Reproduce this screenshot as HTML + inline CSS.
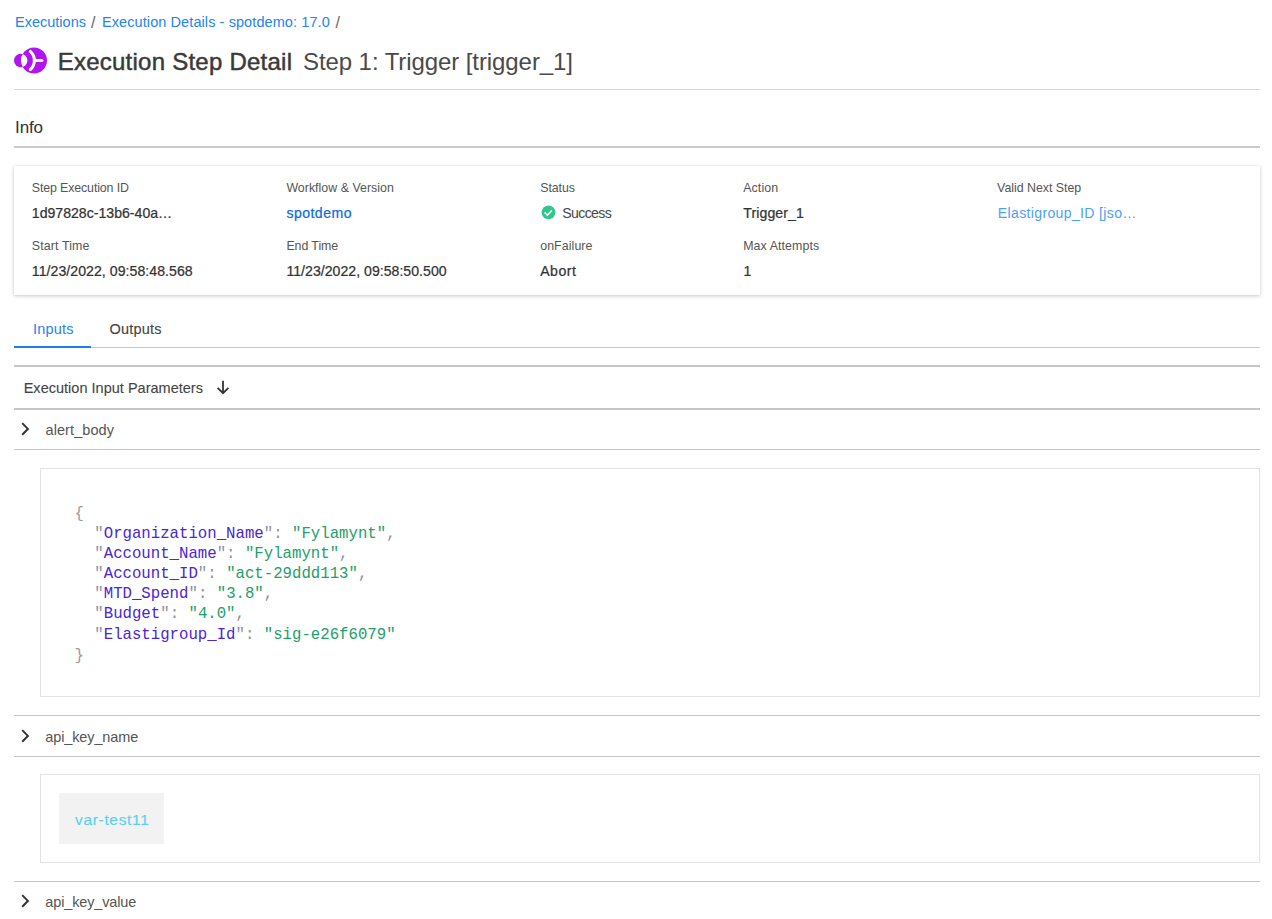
<!DOCTYPE html>
<html><head><meta charset="utf-8"><title>Execution Step Detail</title>
<style>
html,body{margin:0;padding:0;background:#fff;width:1272px;height:919px;overflow:hidden;position:relative;font-family:"Liberation Sans",sans-serif;}
.t{position:absolute;white-space:nowrap;font-family:"Liberation Sans",sans-serif;}
.m{position:absolute;white-space:pre;font-family:"Liberation Mono",monospace;font-size:15.7px;line-height:15.7px;}
.hl{position:absolute;left:14px;width:1246px;}
.pn{color:#8b90a6}
.br{color:#9a9a9a}
.ky{color:#4a25d9}
.st{color:#22a06b}
.card{position:absolute;left:14px;top:166px;width:1246px;height:129px;background:#fff;box-shadow:0 1px 4px rgba(0,0,0,0.2),0 0 1px rgba(0,0,0,0.12);}
.box{position:absolute;left:40px;width:1218px;border:1px solid #e3e3e3;background:#fff;}
svg{position:absolute;overflow:visible}
</style></head><body>
<svg style="left:0;top:0" width="60" height="90" viewBox="0 0 60 90">
  <circle cx="20.7" cy="60.5" r="6.7" fill="#b114ef"/>
  <circle cx="34" cy="60.5" r="13" fill="#b114ef"/>
  <clipPath id="cpS"><circle cx="20.7" cy="60.5" r="6.7"/></clipPath>
  <circle cx="34" cy="60.5" r="13" fill="#fff" clip-path="url(#cpS)"/>
  <path d="M30.3 51.4 A12.18 12.18 0 0 1 30.3 69.6" fill="none" stroke="#fff" stroke-width="3" stroke-linecap="round"/>
  <path d="M34.3 60.5 L41.9 60.5" fill="none" stroke="#fff" stroke-width="3.1" stroke-linecap="round"/>
</svg>
<div class="hl" style="top:89px;height:1px;background:#d4d4d4"></div>
<div class="hl" style="top:146px;height:2px;background:#c9c9c9"></div>
<div class="card"></div>
<svg style="left:0;top:0" width="600" height="300">
  <circle cx="548.5" cy="212.3" r="6.9" fill="#2dc98a"/>
  <path d="M544.6 212.4 L547.4 215.2 L551.9 210.4" fill="none" stroke="#fff" stroke-width="1.6"/>
</svg>
<div class="hl" style="top:347px;height:1px;background:#c8c8c8"></div>
<div style="position:absolute;left:14px;top:346px;width:77px;height:2px;background:#1a7ef5"></div>
<div class="hl" style="top:365px;height:2px;background:#c6c6c6"></div>
<svg style="left:0;top:0" width="300" height="919">
  <path d="M223 380.8 V393" fill="none" stroke="#333" stroke-width="1.8"/>
  <path d="M217.6 387.8 L223 393.2 L228.4 387.8" fill="none" stroke="#333" stroke-width="1.8"/>
  <path d="M22.2 423.1 L27.9 428.9 L22.2 434.7" fill="none" stroke="#333" stroke-width="2"/>
  <path d="M22.2 730.1 L27.9 735.9 L22.2 741.7" fill="none" stroke="#333" stroke-width="2"/>
  <path d="M22.2 895.1 L27.9 900.9 L22.2 906.7" fill="none" stroke="#333" stroke-width="2"/>
</svg>
<div class="hl" style="top:408px;height:2px;background:#c6c6c6"></div>
<div class="hl" style="top:449px;height:1px;background:#c6c6c6"></div>
<div class="box" style="top:468px;height:227px"></div>
<div class="hl" style="top:715px;height:1px;background:#c6c6c6"></div>
<div class="hl" style="top:756px;height:1px;background:#c6c6c6"></div>
<div class="box" style="top:774px;height:87px"></div>
<div style="position:absolute;left:59px;top:793px;width:105px;height:51px;background:#f2f2f2"></div>
<div class="hl" style="top:881px;height:1px;background:#c6c6c6"></div>
<span class="t" style="left:15.00px;top:15.33px;font-size:14.5px;line-height:14.5px;letter-spacing:0.006px;color:#2484f2;font-weight:400;">Executions</span>
<span class="t" style="left:91.00px;top:14.96px;font-size:16px;line-height:16px;letter-spacing:0.000px;color:#666;font-weight:400;">/</span>
<span class="t" style="left:102.00px;top:15.33px;font-size:14.5px;line-height:14.5px;letter-spacing:0.086px;color:#2484f2;font-weight:400;">Execution Details - spotdemo: 17.0</span>
<span class="t" style="left:335.40px;top:14.96px;font-size:16px;line-height:16px;letter-spacing:0.000px;color:#666;font-weight:400;">/</span>
<span class="t" style="left:57.70px;top:50.08px;font-size:24px;line-height:24px;letter-spacing:0.243px;color:#3a3a3a;font-weight:400;-webkit-text-stroke:0.48px currentColor;">Execution Step Detail</span>
<span class="t" style="left:303.00px;top:49.88px;font-size:24px;line-height:24px;letter-spacing:-0.083px;color:#4a4a4a;font-weight:400;">Step 1: Trigger [trigger_1]</span>
<span class="t" style="left:15.10px;top:118.51px;font-size:17px;line-height:17px;letter-spacing:-0.183px;color:#333;font-weight:400;">Info</span>
<span class="t" style="left:31.80px;top:181.50px;font-size:12.4px;line-height:12.4px;letter-spacing:-0.128px;color:#555;font-weight:400;">Step Execution ID</span>
<span class="t" style="left:286.40px;top:181.50px;font-size:12.4px;line-height:12.4px;letter-spacing:0.012px;color:#555;font-weight:400;">Workflow &amp; Version</span>
<span class="t" style="left:540.20px;top:181.50px;font-size:12.4px;line-height:12.4px;letter-spacing:-0.070px;color:#555;font-weight:400;">Status</span>
<span class="t" style="left:743.20px;top:181.50px;font-size:12.4px;line-height:12.4px;letter-spacing:0.110px;color:#555;font-weight:400;">Action</span>
<span class="t" style="left:997.10px;top:181.50px;font-size:12.4px;line-height:12.4px;letter-spacing:-0.025px;color:#555;font-weight:400;">Valid Next Step</span>
<span class="t" style="left:31.80px;top:240.10px;font-size:12.4px;line-height:12.4px;letter-spacing:0.122px;color:#555;font-weight:400;">Start Time</span>
<span class="t" style="left:286.40px;top:240.10px;font-size:12.4px;line-height:12.4px;letter-spacing:-0.071px;color:#555;font-weight:400;">End Time</span>
<span class="t" style="left:540.20px;top:240.10px;font-size:12.4px;line-height:12.4px;letter-spacing:0.075px;color:#555;font-weight:400;">onFailure</span>
<span class="t" style="left:743.20px;top:240.10px;font-size:12.4px;line-height:12.4px;letter-spacing:0.082px;color:#555;font-weight:400;">Max Attempts</span>
<span class="t" style="left:31.80px;top:205.56px;font-size:14.1px;line-height:14.1px;letter-spacing:0.006px;color:#333;font-weight:400;-webkit-text-stroke:0.24px currentColor;">1d97828c-13b6-40a…</span>
<span class="t" style="left:286.40px;top:205.56px;font-size:14.1px;line-height:14.1px;letter-spacing:0.457px;color:#0b6be0;font-weight:400;-webkit-text-stroke:0.24px currentColor;">spotdemo</span>
<span class="t" style="left:562.30px;top:205.56px;font-size:14.1px;line-height:14.1px;letter-spacing:-0.633px;color:#474747;font-weight:400;">Success</span>
<span class="t" style="left:743.20px;top:205.56px;font-size:14.1px;line-height:14.1px;letter-spacing:0.113px;color:#333;font-weight:400;-webkit-text-stroke:0.24px currentColor;">Trigger_1</span>
<span class="t" style="left:997.80px;top:205.76px;font-size:14.1px;line-height:14.1px;letter-spacing:0.329px;color:#4d9ffc;font-weight:400;">Elastigroup_ID [jso…</span>
<span class="t" style="left:31.80px;top:263.56px;font-size:14.1px;line-height:14.1px;letter-spacing:0.052px;color:#333;font-weight:400;-webkit-text-stroke:0.24px currentColor;">11/23/2022, 09:58:48.568</span>
<span class="t" style="left:286.40px;top:263.56px;font-size:14.1px;line-height:14.1px;letter-spacing:0.026px;color:#333;font-weight:400;-webkit-text-stroke:0.24px currentColor;">11/23/2022, 09:58:50.500</span>
<span class="t" style="left:540.20px;top:263.56px;font-size:14.1px;line-height:14.1px;letter-spacing:0.525px;color:#333;font-weight:400;-webkit-text-stroke:0.24px currentColor;">Abort</span>
<span class="t" style="left:743.50px;top:263.56px;font-size:14.1px;line-height:14.1px;letter-spacing:0.000px;color:#333;font-weight:400;-webkit-text-stroke:0.24px currentColor;">1</span>
<span class="t" style="left:32.90px;top:321.63px;font-size:14.5px;line-height:14.5px;letter-spacing:0.220px;color:#2484f2;font-weight:400;">Inputs</span>
<span class="t" style="left:109.40px;top:322.13px;font-size:14.5px;line-height:14.5px;letter-spacing:0.233px;color:#444;font-weight:400;-webkit-text-stroke:0.10px currentColor;">Outputs</span>
<span class="t" style="left:23.70px;top:380.53px;font-size:14.5px;line-height:14.5px;letter-spacing:0.014px;color:#444;font-weight:400;-webkit-text-stroke:0.10px currentColor;">Execution Input Parameters</span>
<span class="t" style="left:45.50px;top:422.73px;font-size:14.5px;line-height:14.5px;letter-spacing:0.089px;color:#555;font-weight:400;">alert_body</span>
<span class="t" style="left:45.30px;top:730.13px;font-size:14.5px;line-height:14.5px;letter-spacing:-0.127px;color:#555;font-weight:400;">api_key_name</span>
<span class="t" style="left:45.30px;top:895.13px;font-size:14.5px;line-height:14.5px;letter-spacing:-0.142px;color:#555;font-weight:400;">api_key_value</span>
<span class="t" style="left:75.00px;top:812.18px;font-size:15.5px;line-height:15.5px;letter-spacing:0.672px;color:#5cd0ec;font-weight:400;-webkit-text-stroke:0.15px currentColor;">var-test11</span>
<div class="m" style="left:74.46px;top:507.37px"><span class="br">{</span></div>
<div class="m" style="left:94.30px;top:526.57px"><span class="pn">"</span><span class="ky">Organization_Name</span><span class="pn">"</span><span class="pn">:</span> <span class="st">"Fylamynt"</span><span class="pn">,</span></div>
<div class="m" style="left:94.30px;top:546.77px"><span class="pn">"</span><span class="ky">Account_Name</span><span class="pn">"</span><span class="pn">:</span> <span class="st">"Fylamynt"</span><span class="pn">,</span></div>
<div class="m" style="left:94.30px;top:566.97px"><span class="pn">"</span><span class="ky">Account_ID</span><span class="pn">"</span><span class="pn">:</span> <span class="st">"act-29ddd113"</span><span class="pn">,</span></div>
<div class="m" style="left:94.30px;top:587.17px"><span class="pn">"</span><span class="ky">MTD_Spend</span><span class="pn">"</span><span class="pn">:</span> <span class="st">"3.8"</span><span class="pn">,</span></div>
<div class="m" style="left:94.30px;top:607.37px"><span class="pn">"</span><span class="ky">Budget</span><span class="pn">"</span><span class="pn">:</span> <span class="st">"4.0"</span><span class="pn">,</span></div>
<div class="m" style="left:94.30px;top:627.57px"><span class="pn">"</span><span class="ky">Elastigroup_Id</span><span class="pn">"</span><span class="pn">:</span> <span class="st">"sig-e26f6079"</span></div>
<div class="m" style="left:74.46px;top:648.77px"><span class="br">}</span></div>
</body></html>
